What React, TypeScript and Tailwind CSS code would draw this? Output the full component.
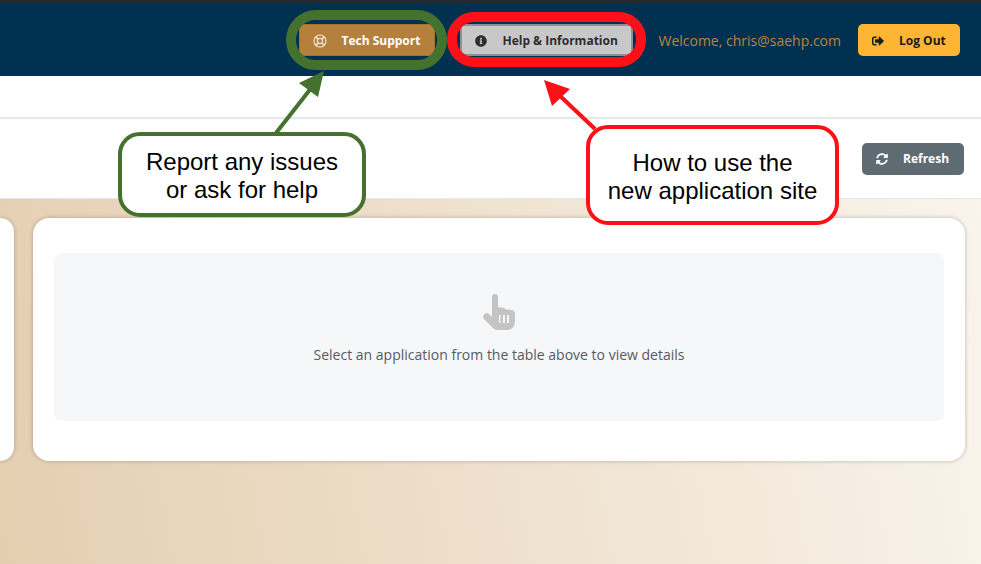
import React from "react";
import { FaInfoCircle, FaSignOutAlt, FaSyncAlt } from "react-icons/fa";

const LifeRingIcon = () => (
  <svg width="14" height="14" viewBox="0 0 14 14" fill="none" stroke="#f3e6d4" strokeWidth="1.1">
    <circle cx="7" cy="7" r="6" />
    <circle cx="7" cy="7" r="2.6" />
    <path d="M2.8 2.8 5.2 5.2M8.8 8.8 11.2 11.2M11.2 2.8 8.8 5.2M5.2 8.8 2.8 11.2" strokeWidth="1.5" />
  </svg>
);

const HandIcon = () => (
  <svg width="34" height="38" viewBox="0 0 34 38">
    <path
      d="M10 4a3 3 0 0 1 6 0v10l6 1 2 1.500 6 .5q3 .5 3 4v7q0 9-9 9H15q-3 0-5-3L2 26q-2-3 .5-5t5 .5L10 24z"
      fill="#c4c4c4"
    />
    <path d="M17 22h1.500v8H17zM21 22h2v8h-2zM25 22h2v8h-2z" fill="#f6f7f9" />
  </svg>
);

const App = () => {
  return (
    <div className="relative w-[981px] h-[564px] overflow-hidden bg-white font-['Open_Sans',sans-serif]">
      {/* Top bar */}
      <div className="h-[3px] bg-[#2a2a2f]" />
      <header className="h-[73px] bg-[#003150] flex items-center justify-end pr-[21px] pt-[1px]">
        <button className="h-[32px] w-[136px] flex items-center pl-[13px] pt-px gap-[14px] rounded-[3px] bg-[#b57f3c] border border-[#a5712f] text-white text-[12px] font-bold">
          <LifeRingIcon />
          Tech Support
        </button>
        <button className="ml-[25px] h-[32px] w-[173px] flex items-center pl-[13px] pt-px gap-[15px] rounded-[3px] bg-[#c8c8c8] border-2 border-[#8b9196] text-[#2d2d2d] text-[12px] font-bold">
          <FaInfoCircle className="text-[12px]" />
          Help &amp; Information
        </button>
        <span className="ml-[25px] text-[14px] text-[#bb843f]">Welcome, chris@saehp.com</span>
        <button className="ml-[17px] h-[32px] w-[102px] flex items-center pl-[14px] pt-px gap-[15px] rounded-[5px] bg-[#ffb534] text-[#1c1c1c] text-[12px] font-bold">
          <FaSignOutAlt className="text-[12px]" />
          Log Out
        </button>
      </header>

      {/* Nav strip */}
      <div className="h-[43px] bg-white border-b-2 border-[#e4e8ec]" />

      {/* Toolbar */}
      <div className="h-[79px] bg-white flex items-center justify-end pr-[17px] pt-[1px]">
        <button className="h-[32px] w-[102px] flex items-center pl-[14px] gap-[15px] rounded-[5px] bg-[#5f6b73] text-white text-[12px] font-bold">
          <FaSyncAlt className="text-[12px]" />
          Refresh
        </button>
      </div>

      {/* Content */}
      <main className="h-[366px] border-t border-[#e4e8ec] bg-[linear-gradient(80deg,#e4ceb0,#f9f4ec)] pt-[19px] flex gap-[19px]">
        <div className="w-[14px] h-[243px] bg-white rounded-r-[16px] shadow-[0_0_4px_rgba(0,0,0,0.25)]" />
        <section className="w-[932px] h-[243px] bg-white rounded-[16px] shadow-[0_0_4px_rgba(0,0,0,0.25)] pt-[35px] px-[21px]">
          <div className="h-[168px] bg-[#f6f7f9] rounded-[8px] flex flex-col items-center pt-[40px]">
            <HandIcon />
            <p className="mt-[14px] text-[14px] leading-[20px] text-[#555a5f]">Select an application from the table above to view details</p>
          </div>
        </section>
      </main>

      {/* Annotation rings */}
      <div className="absolute left-[286px] top-[10px] w-[161px] h-[60px] rounded-[30px] border-[10px] border-[#44712e]" />
      <div className="absolute left-[447px] top-[12px] w-[199px] h-[55px] rounded-[27px] border-[10px] border-[#fe1019]" />

      {/* Annotation arrows */}
      <svg className="absolute left-0 top-0 pointer-events-none" width="981" height="564">
        <line x1="276" y1="133" x2="312" y2="87" stroke="#44712e" strokeWidth="4" />
        <polygon points="324,71 318,97 299,83" fill="#44712e" />
        <line x1="595" y1="129" x2="558" y2="94" stroke="#fe1019" strokeWidth="4" />
        <polygon points="544,80 570,89 552,106" fill="#fe1019" />
      </svg>

      {/* Callouts */}
      <div className="absolute left-[118px] top-[132px] w-[248px] h-[85px] rounded-[22px] border-[4px] border-[#44712e] bg-white flex items-center justify-center text-center font-['Liberation_Sans',sans-serif] text-[24px] leading-[28px] pt-[2px] text-black">
        Report any issues<br />or ask for help
      </div>
      <div className="absolute left-[586px] top-[125px] w-[253px] h-[100px] rounded-[22px] border-[4px] border-[#fe1019] bg-white flex items-center justify-center text-center font-['Liberation_Sans',sans-serif] text-[24px] leading-[28px] pt-[4px] text-black">
        How to use the<br />new application site
      </div>
    </div>
  );
};

export default App;
